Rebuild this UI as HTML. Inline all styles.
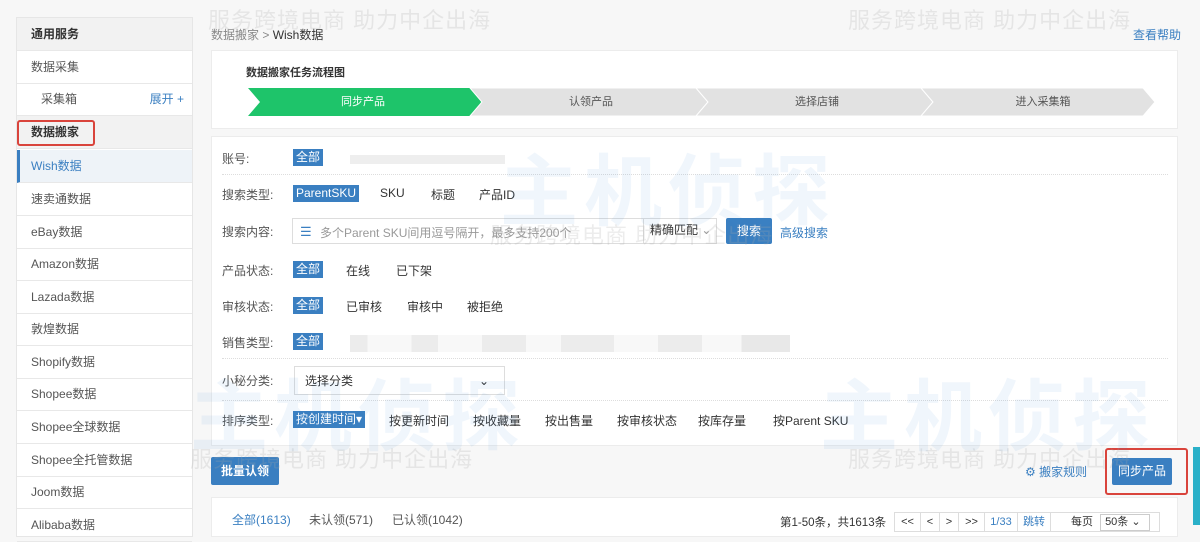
<!DOCTYPE html>
<html><head><meta charset="utf-8"><style>
*{margin:0;padding:0;box-sizing:border-box}
body{width:1200px;height:534px;overflow:hidden;background:#f7f7f7;font-family:"Liberation Sans","Noto Sans CJK SC",sans-serif;font-size:12px;color:#333;position:relative}
.a{position:absolute}
.side{left:16px;top:17px;width:177px;height:520px;background:#fff;border:1px solid #e6e6e6}
.si{position:absolute;left:0;width:175px;height:33px;line-height:32px;padding-left:14px;border-bottom:1px solid #e8e8e8;color:#555}
.sh{background:#f2f2f2;font-weight:bold;color:#333}
.panel{background:#fff;border:1px solid #ececec}
.step{position:absolute;top:88px;height:28px;line-height:28px;text-align:center;color:#555;font-size:11px}
.lab{position:absolute;left:222px;color:#555}
.tag{position:absolute;background:#3a7fc1;color:#fff;padding:0 3px;height:17px;line-height:17px}
.opt{position:absolute;color:#333}
.dot{position:absolute;left:222px;width:946px;border-top:1px dotted #ddd}
.btn{position:absolute;background:#3a7fc1;color:#fff;text-align:center;border-radius:2px}
.wm{position:absolute;color:rgba(170,170,170,.22);font-size:22px;letter-spacing:1px;white-space:nowrap}
.big{position:absolute;color:rgba(60,140,215,.08);font-size:78px;font-weight:bold;white-space:nowrap;letter-spacing:6px}
.pg{position:absolute;top:512px;height:20px;line-height:19px;border:1px solid #ddd;background:#fff;text-align:center;font-size:11px}
</style></head><body>
<div class="a side"></div>
<div class="si sh" style="left:17px;top:18px">通用服务</div>
<div class="si" style="left:17px;top:51px">数据采集</div>
<div class="si" style="left:17px;top:83px;padding-left:24px">采集箱<span style="position:absolute;right:8px;color:#3a7fc1">展开 +</span></div>
<div class="si sh" style="left:17px;top:116px">数据搬家</div>
<div class="a" style="left:17px;top:120px;width:78px;height:26px;border:2px solid #d9443c;border-radius:3px"></div>
<div class="si" style="left:17px;top:150px;background:#eef3f8;color:#3a7fc1;border-left:3px solid #3a7fc1;padding-left:11px">Wish数据</div>
<div class="si" style="left:17px;top:183px">速卖通数据</div>
<div class="si" style="left:17px;top:216px">eBay数据</div>
<div class="si" style="left:17px;top:248px">Amazon数据</div>
<div class="si" style="left:17px;top:281px">Lazada数据</div>
<div class="si" style="left:17px;top:313px">敦煌数据</div>
<div class="si" style="left:17px;top:346px">Shopify数据</div>
<div class="si" style="left:17px;top:378px">Shopee数据</div>
<div class="si" style="left:17px;top:411px">Shopee全球数据</div>
<div class="si" style="left:17px;top:444px">Shopee全托管数据</div>
<div class="si" style="left:17px;top:476px">Joom数据</div>
<div class="si" style="left:17px;top:509px">Alibaba数据</div>

<div class="a" style="left:211px;top:26px;color:#888">数据搬家 &gt; <span style="color:#333">Wish数据</span></div>
<div class="a" style="left:1133px;top:26px;color:#3a7fc1">查看帮助</div>

<div class="a panel" style="left:211px;top:50px;width:967px;height:79px"></div>
<div class="a" style="left:246px;top:64px;font-weight:bold;font-size:11px">数据搬家任务流程图</div>
<svg class="a" style="left:248px;top:88px" width="910" height="28">
<polygon points="0,0 222,0 234,14 222,28 0,28 12,14" fill="#1ec46a"/>
<polygon points="222,0 448,0 460,14 448,28 222,28 234,14" fill="#e2e2e2" stroke="#fff" stroke-width="1"/>
<polygon points="448,0 673,0 685,14 673,28 448,28 460,14" fill="#e2e2e2" stroke="#fff" stroke-width="1"/>
<polygon points="673,0 895,0 907,14 895,28 673,28 685,14" fill="#e2e2e2" stroke="#fff" stroke-width="1"/>
</svg>
<div class="step" style="left:248px;width:230px;color:#fff">同步产品</div>
<div class="step" style="left:478px;width:226px">认领产品</div>
<div class="step" style="left:704px;width:226px">选择店铺</div>
<div class="step" style="left:930px;width:226px">进入采集箱</div>

<div class="a panel" style="left:211px;top:136px;width:967px;height:310px"></div>
<div class="lab" style="top:150px">账号:</div>
<div class="a" style="left:350px;top:155px;width:155px;height:9px;background:#eee"></div>
<div class="tag" style="left:293px;top:149px">全部</div>
<div class="dot" style="top:174px"></div>
<div class="lab" style="top:186px">搜索类型:</div><div class="tag" style="left:293px;top:185px">ParentSKU</div>
<div class="opt" style="left:380px;top:186px">SKU</div><div class="opt" style="left:431px;top:186px">标题</div><div class="opt" style="left:479px;top:186px">产品ID</div>
<div class="lab" style="top:223px">搜索内容:</div>
<div class="a" style="left:292px;top:218px;width:425px;height:26px;border:1px solid #ddd;background:#fff"></div>
<div class="a" style="left:300px;top:224px;color:#3a7fc1;font-size:13px">☰</div>
<div class="a" style="left:320px;top:224px;color:#999">多个Parent SKU间用逗号隔开，最多支持200个</div>
<div class="a" style="left:643px;top:218px;width:74px;height:26px;border-left:1px solid #ddd;line-height:25px;padding-left:6px">精确匹配 <span style="color:#999">⌄</span></div>
<div class="btn" style="left:726px;top:218px;width:46px;height:26px;line-height:26px">搜索</div>
<div class="a" style="left:780px;top:224px;color:#3a7fc1">高级搜索</div>
<div class="lab" style="top:262px">产品状态:</div><div class="tag" style="left:293px;top:261px">全部</div>
<div class="opt" style="left:346px;top:262px">在线</div><div class="opt" style="left:396px;top:262px">已下架</div>
<div class="lab" style="top:298px">审核状态:</div><div class="tag" style="left:293px;top:297px">全部</div>
<div class="opt" style="left:346px;top:298px">已审核</div><div class="opt" style="left:407px;top:298px">审核中</div><div class="opt" style="left:467px;top:298px">被拒绝</div>
<div class="lab" style="top:334px">销售类型:</div><div class="tag" style="left:293px;top:333px">全部</div>
<div class="a" style="left:350px;top:335px;width:440px;height:17px;background:linear-gradient(90deg,#ececec 0 4%,#f8f8f8 4% 14%,#ececec 14% 20%,#f8f8f8 20% 30%,#ececec 30% 40%,#f8f8f8 40% 48%,#ececec 48% 60%,#f8f8f8 60% 70%,#ececec 70% 80%,#f8f8f8 80% 89%,#e8e8e8 89% 100%)"></div>
<div class="dot" style="top:358px"></div>
<div class="lab" style="top:372px">小秘分类:</div>
<div class="a" style="left:294px;top:366px;width:211px;height:29px;border:1px solid #ddd;background:#fff;line-height:28px;padding-left:10px">选择分类<span style="position:absolute;left:184px">⌄</span></div>
<div class="dot" style="top:400px"></div>
<div class="lab" style="top:412px">排序类型:</div><div class="tag" style="left:293px;top:411px">按创建时间▾</div>
<div class="opt" style="left:389px;top:412px">按更新时间</div><div class="opt" style="left:473px;top:412px">按收藏量</div><div class="opt" style="left:545px;top:412px">按出售量</div>
<div class="opt" style="left:617px;top:412px">按审核状态</div><div class="opt" style="left:698px;top:412px">按库存量</div><div class="opt" style="left:773px;top:412px">按Parent SKU</div>

<div class="btn" style="left:211px;top:457px;width:68px;height:28px;line-height:28px;font-weight:bold">批量认领</div>
<div class="a" style="left:1025px;top:463px;color:#3a7fc1">⚙ 搬家规则</div>
<div class="btn" style="left:1112px;top:458px;width:60px;height:27px;line-height:27px">同步产品</div>
<div class="a" style="left:1105px;top:448px;width:83px;height:47px;border:2px solid #d9443c;border-radius:3px"></div>
<div class="a" style="left:1193px;top:447px;width:7px;height:78px;background:#2ab0c8"></div>

<div class="a panel" style="left:211px;top:497px;width:967px;height:40px"></div>
<div class="a" style="left:232px;top:511px;color:#3a7fc1">全部(1613)</div>
<div class="a" style="left:309px;top:511px;color:#555">未认领(571)</div>
<div class="a" style="left:392px;top:511px;color:#555">已认领(1042)</div>
<div class="a" style="left:780px;top:514px;font-size:11.5px">第1-50条，共1613条</div>
<div class="pg" style="left:894px;width:27px">&lt;&lt;</div>
<div class="pg" style="left:920px;width:20px">&lt;</div>
<div class="pg" style="left:939px;width:20px">&gt;</div>
<div class="pg" style="left:958px;width:27px">&gt;&gt;</div>
<div class="pg" style="left:984px;width:34px;color:#3a7fc1">1/33</div>
<div class="pg" style="left:1017px;width:34px;color:#3a7fc1">跳转</div>
<div class="pg" style="left:1050px;width:110px;text-align:left;padding-left:20px">每页 <span style="display:inline-block;border:1px solid #ccc;padding:0 4px;width:50px;height:17px;line-height:15px;margin-left:4px">50条 ⌄</span></div>

<div class="wm" style="left:208px;top:3px">服务跨境电商 助力中企出海</div>
<div class="wm" style="left:848px;top:3px">服务跨境电商 助力中企出海</div>
<div class="wm" style="left:490px;top:218px">服务跨境电商 助力中企出海</div>
<div class="wm" style="left:190px;top:442px">服务跨境电商 助力中企出海</div>
<div class="wm" style="left:848px;top:442px">服务跨境电商 助力中企出海</div>
<div class="big" style="left:500px;top:130px">主机侦探</div>
<div class="big" style="left:190px;top:355px">主机侦探</div>
<div class="big" style="left:820px;top:355px">主机侦探</div>
</body></html>
